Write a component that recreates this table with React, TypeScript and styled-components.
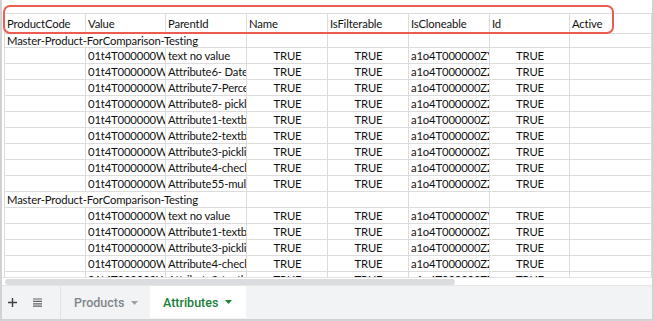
import React from 'react';
import styled, { createGlobalStyle } from 'styled-components';

const GlobalStyle = createGlobalStyle`
  html, body { margin: 0; padding: 0; background: #fff; }
  body { width: 654px; height: 321px; overflow: hidden; font-family: Lato, "Liberation Sans", sans-serif; }
`;

const Frame = styled.div`
  position: relative;
  width: 654px;
  height: 321px;
  box-sizing: border-box;
  border: 2px solid #d2d2d2;
  border-top: none;
  display: flex;
  flex-direction: column;
  background: #fff;
`;

const Viewport = styled.div`
  height: 277px;
  flex: none;
  overflow: hidden;
  padding: 13px 0 0 2px;
  box-sizing: border-box;
`;

const Grid = styled.div`
  display: grid;
  grid-template-columns: 81px 80px 81px 81px 81px 81px 80px 82px;
  grid-template-rows: 20px 14px;
  grid-auto-rows: 16px;
  border-top: 1px solid #dcdcdc;
  border-left: 1px solid #dcdcdc;
  width: max-content;
`;

const Cell = styled.div<{ $align?: 'left' | 'center'; $span?: number }>`
  box-sizing: border-box;
  border-right: 1px solid #dcdcdc;
  border-bottom: 1px solid #dcdcdc;
  padding: 0 1px 0 2px;
  font-size: 11.3px;
  letter-spacing: -0.16px;
  color: #111;
  white-space: nowrap;
  overflow: hidden;
  display: flex;
  align-items: center;
  justify-content: ${(p) => (p.$align === 'center' ? 'center' : 'flex-start')};
  grid-column: ${(p) => (p.$span ? `span ${p.$span}` : 'auto')};
`;

const HScroll = styled.div`
  height: 9px;
  flex: none;
  box-sizing: border-box;
  border-top: 1px solid #e3e3e3;
  border-bottom: 1px solid #e6e6e6;
  padding: 0 0 0 3px;
  display: flex;
  align-items: center;
`;

const Thumb = styled.div`
  width: 450px;
  height: 6px;
  border-radius: 3px;
  background: #dadce0;
`;

const TabBar = styled.div`
  flex: 1;
  background: #f1f3f4;
  display: flex;
  align-items: stretch;
`;

const IconButton = styled.div<{ $gap?: number }>`
  width: 20px;
  margin-left: ${(p) => p.$gap ?? 0}px;
  display: flex;
  align-items: center;
  justify-content: center;
  color: #5f6368;
`;

const Tab = styled.div<{ $active?: boolean; $width: number; $gap: number }>`
  width: ${(p) => p.$width}px;
  margin-left: ${(p) => p.$gap}px;
  box-sizing: border-box;
  padding-left: 13px;
  display: flex;
  align-items: center;
  gap: 7px;
  font-family: Roboto, "Liberation Sans", sans-serif;
  font-size: 12.5px;
  font-weight: 500;
  color: ${(p) => (p.$active ? '#188038' : '#80868b')};
  background: ${(p) => (p.$active ? '#ffffff' : 'transparent')};
  border-left: ${(p) => (p.$active ? 'none' : '1px solid #e2e3e5')};
  margin-bottom: ${(p) => (p.$active ? '1px' : '0')};
`;

const Callout = styled.div`
  position: absolute;
  left: 1px;
  top: 5px;
  width: 611px;
  height: 29px;
  box-sizing: border-box;
  border: 2px solid #ee5b50;
  border-radius: 7px;
  pointer-events: none;
`;

const headers = ['ProductCode', 'Value', 'ParentId', 'Name', 'IsFilterable', 'IsCloneable', 'Id', 'Active'];

type Row = { kind: 'group'; label: string } | { kind: 'item'; parent: string; clone: string };

const group = 'Master-Product-ForComparison-Testing';
const rows: Row[] = [
  { kind: 'group', label: group },
  { kind: 'item', parent: 'text no value', clone: 'a1o4T000000ZYk' },
  { kind: 'item', parent: 'Attribute6- Date', clone: 'a1o4T000000ZZa' },
  { kind: 'item', parent: 'Attribute7-Percent', clone: 'a1o4T000000ZZa' },
  { kind: 'item', parent: 'Attribute8- picklist', clone: 'a1o4T000000ZZa' },
  { kind: 'item', parent: 'Attribute1-textbox', clone: 'a1o4T000000ZZa' },
  { kind: 'item', parent: 'Attribute2-textbox', clone: 'a1o4T000000ZZa' },
  { kind: 'item', parent: 'Attribute3-picklist', clone: 'a1o4T000000ZZa' },
  { kind: 'item', parent: 'Attribute4-checkbox', clone: 'a1o4T000000ZZa' },
  { kind: 'item', parent: 'Attribute55-multi', clone: 'a1o4T000000ZZa' },
  { kind: 'group', label: group },
  { kind: 'item', parent: 'text no value', clone: 'a1o4T000000ZYk' },
  { kind: 'item', parent: 'Attribute1-textbox', clone: 'a1o4T000000ZZa' },
  { kind: 'item', parent: 'Attribute3-picklist', clone: 'a1o4T000000ZZa' },
  { kind: 'item', parent: 'Attribute4-checkbox', clone: 'a1o4T000000ZZa' },
  { kind: 'item', parent: 'Attribute2-textbox', clone: 'a1o4T000000ZZa' },
];

const Caret = ({ color }: { color: string }) => (
  <svg width="7" height="4" viewBox="0 0 7 4">
    <path d="M0 0 L7 0 L3.5 4 Z" fill={color} />
  </svg>
);

export default function App() {
  return (
    <>
      <GlobalStyle />
      <Frame>
        <Viewport>
          <Grid>
            {headers.map((h) => (
              <Cell key={h}>{h}</Cell>
            ))}
            {rows.map((r, i) =>
              r.kind === 'group' ? (
                <React.Fragment key={i}>
                  <Cell $span={3}>{r.label}</Cell>
                  <Cell />
                  <Cell />
                  <Cell />
                  <Cell />
                  <Cell />
                </React.Fragment>
              ) : (
                <React.Fragment key={i}>
                  <Cell />
                  <Cell>01t4T000000W</Cell>
                  <Cell>{r.parent}</Cell>
                  <Cell $align="center">TRUE</Cell>
                  <Cell $align="center">TRUE</Cell>
                  <Cell>{r.clone}</Cell>
                  <Cell $align="center">TRUE</Cell>
                  <Cell />
                </React.Fragment>
              )
            )}
          </Grid>
        </Viewport>
        <HScroll>
          <Thumb />
        </HScroll>
        <TabBar>
          <IconButton>
            <svg width="9" height="9" viewBox="0 0 9 9">
              <path d="M4.5 0 V9 M0 4.5 H9" stroke="#3c4043" strokeWidth="1.4" />
            </svg>
          </IconButton>
          <IconButton $gap={5}>
            <svg width="9" height="9" viewBox="0 0 9 9">
              <path d="M0 1 H9 M0 3.4 H9 M0 5.8 H9 M0 8.2 H9" stroke="#5f6368" strokeWidth="1.2" />
            </svg>
          </IconButton>
          <Tab $width={88} $gap={13}>
            Products
            <Caret color="#9aa0a6" />
          </Tab>
          <Tab $active $width={96} $gap={2}>
            Attributes
            <Caret color="#188038" />
          </Tab>
        </TabBar>
        <Callout />
      </Frame>
    </>
  );
}
